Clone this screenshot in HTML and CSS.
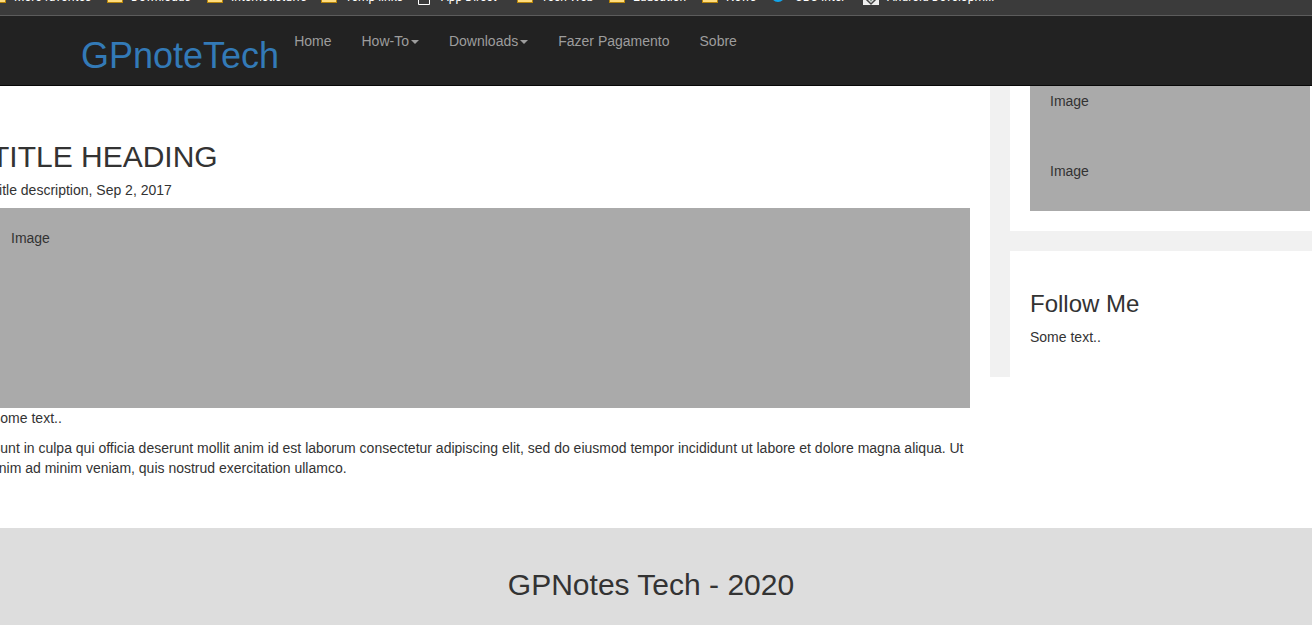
FILE: index.html
```html
<!DOCTYPE html>
<html lang="pt">
<head>
<meta charset="utf-8">
<title>GPnoteTech</title>
<link rel="stylesheet" href="styles.css">
</head>
<body>
<svg class="symbols" aria-hidden="true">
  <symbol id="folder" viewBox="0 0 16 16"><path d="M0 2h6l2 2h8v12H0z" fill="#b8860b"/><path d="M1 5h14v10H1z" fill="#ffdc7c"/></symbol>
</svg>
<nav class="bookmarks" aria-label="Bookmarks">
  <a class="bookmark bookmark-more" href="#"><svg class="icon"><use href="#folder"/></svg>More favorites</a>
  <a class="bookmark bookmark-downloads" href="#"><svg class="icon"><use href="#folder"/></svg>Downloads</a>
  <a class="bookmark bookmark-internet" href="#"><svg class="icon"><use href="#folder"/></svg>Internet.stuffs</a>
  <a class="bookmark bookmark-temp" href="#"><svg class="icon"><use href="#folder"/></svg>Temp links</a>
  <a class="bookmark bookmark-app" href="#"><svg class="icon" viewBox="0 0 16 16"><path d="M1.500 3.500h8l3 4v10h-11z" fill="none" stroke="#fff"/></svg>App Direct</a>
  <a class="bookmark bookmark-tech" href="#"><svg class="icon"><use href="#folder"/></svg>Tech Web</a>
  <a class="bookmark bookmark-education" href="#"><svg class="icon"><use href="#folder"/></svg>Education</a>
  <a class="bookmark bookmark-news" href="#"><svg class="icon"><use href="#folder"/></svg>News</a>
  <a class="bookmark bookmark-cbc" href="#"><svg class="icon" viewBox="0 0 16 16"><circle cx="7" cy="8" r="7" fill="#12a5ea"/></svg>CBC Inter</a>
  <a class="bookmark bookmark-android" href="#"><svg class="icon" viewBox="0 0 16 16"><path d="M0 2h16v16H0z" fill="#eee"/><path d="M2 11l6 6 6-6" fill="none" stroke="#444" stroke-width="1.500"/><path d="M5 11h6l-3 4z" fill="#8a9a92"/></svg>Android Developm...</a>
</nav>
<header class="navbar">
  <h1 class="brand"><a href="#">GPnoteTech</a></h1>
  <nav class="menu">
    <a href="#">Home</a>
    <a href="#">How-To<span class="caret"></span></a>
    <a href="#">Downloads<span class="caret"></span></a>
    <a href="#">Fazer Pagamento</a>
    <a href="#">Sobre</a>
  </nav>
</header>
<main class="content">
  <article class="post">
    <h2>TITLE HEADING</h2>
    <h5>Title description, Sep 2, 2017</h5>
    <div class="image image-large">Image</div>
    <p>Some text..</p>
    <p>Sunt in culpa qui officia deserunt mollit anim id est laborum consectetur adipiscing elit, sed do eiusmod tempor incididunt ut labore et dolore magna aliqua. Ut enim ad minim veniam, quis nostrud exercitation ullamco.</p>
  </article>
  <aside class="sidebar">
    <section class="card card-images">
      <div class="image">Image</div>
      <div class="image">Image</div>
    </section>
    <section class="card card-follow">
      <h3>Follow Me</h3>
      <p>Some text..</p>
    </section>
  </aside>
</main>
<footer class="footer"><h2>GPNotes Tech - 2020</h2></footer>
</body>
</html>
```
FILE: styles.css
```css
* { box-sizing: border-box; }
body {
  margin: 0;
  min-height: 100vh;
  display: flex;
  flex-direction: column;
  overflow: hidden;
  font: 14px/20px "Liberation Sans", Arial, sans-serif;
  color: #333;
  background: #fff;
}
a { text-decoration: none; }
h1, h2, h3, h5, p { margin: 0 0 10px; }
h1, h2, h3, h5 { font-weight: 400; }
h2 { font-size: 30px; line-height: 33px; }
h3 { font-size: 24px; line-height: 26px; }
h5 { font-size: 14px; line-height: 15px; }
.symbols { position: absolute; width: 0; height: 0; }

.bookmarks {
  display: flex;
  height: 16px;
  overflow: hidden;
  background: #3b3b3b;
  border-bottom: 1px solid #5c5c5c;
}
.bookmark {
  display: flex;
  flex: none;
  gap: 8px;
  height: 20px;
  margin-top: -13px;
  white-space: nowrap;
  font: 12px/20px Roboto, sans-serif;
  color: #fff;
}
.icon { flex: none; width: 16px; height: 16px; overflow: visible; }
.bookmark-more { width: 117px; margin-left: -10px; }
.bookmark-downloads { width: 100px; }
.bookmark-internet { width: 114px; }
.bookmark-temp { width: 96px; }
.bookmark-app { width: 100px; }
.bookmark-tech { width: 92px; }
.bookmark-education { width: 93px; }
.bookmark-news { width: 69px; }
.bookmark-cbc { width: 92px; }

.navbar {
  display: flex;
  height: 70px;
  padding-left: 81px;
  background: #222;
  border-bottom: 1px solid #080808;
}
.brand { margin: 20px 0 0; font-size: 36px; line-height: 40px; }
.brand a { color: #337ab7; }
.menu { display: flex; }
.menu a { padding: 15px; color: #9d9d9d; }
.caret {
  display: inline-block;
  vertical-align: middle;
  margin-left: 2px;
  border: 4px solid transparent;
  border-top-color: currentColor;
  border-bottom: 0;
}

.content { display: flex; align-items: flex-start; }
.post { flex: 1; min-width: 0; margin-left: -9px; padding: 54px 20px 40px 0; }
.image { padding: 20px; background: #aaa; }
.image-large { height: 200px; }
.sidebar {
  display: flex;
  flex-direction: column;
  gap: 20px;
  width: 322px;
  padding-left: 20px;
  background: #f1f1f1;
}
.card { background: #fff; }
.card-images { padding: 0 2px 20px 20px; }
.card-images .image { padding: 5px 20px 45px; }
.card-images .image + .image { padding-bottom: 30px; }
.card-follow { padding: 40px 20px 20px; }

.footer { flex: 1; padding: 40px 10px 20px 0; background: #ddd; text-align: center; }
.footer h2 { margin: 0; }
```
